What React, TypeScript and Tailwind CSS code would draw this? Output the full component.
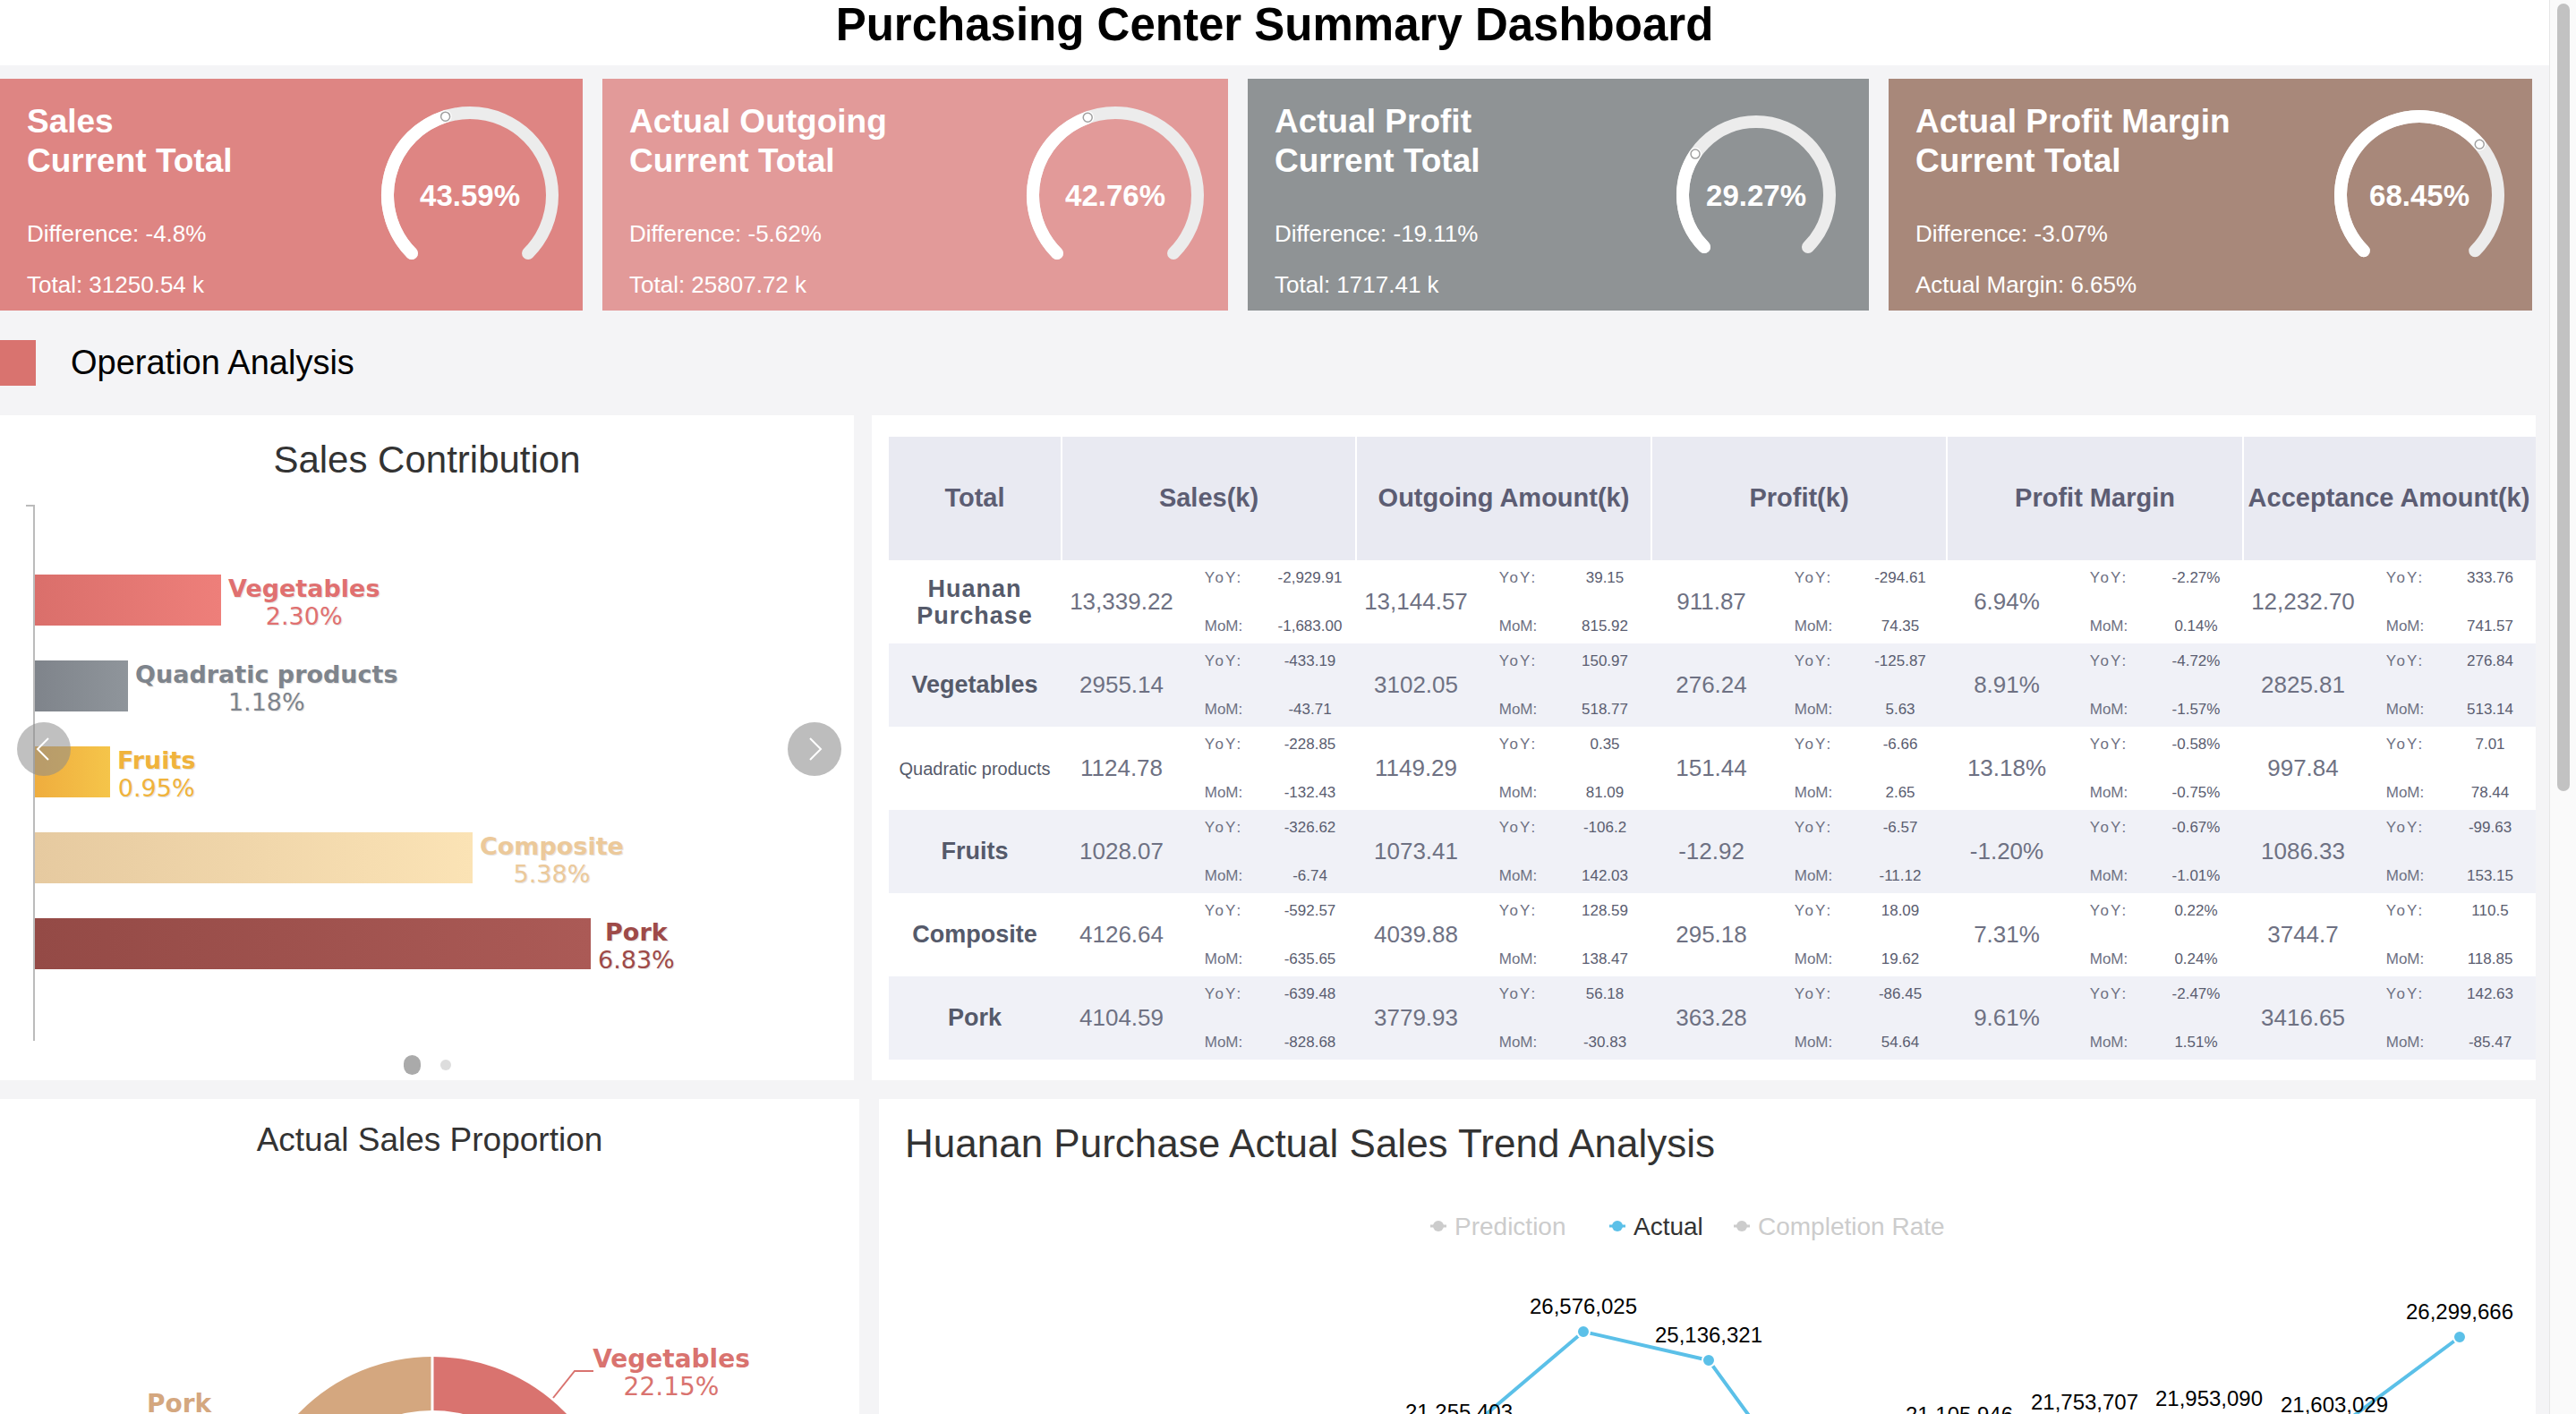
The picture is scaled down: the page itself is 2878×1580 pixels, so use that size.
import React from "react";

const F = { fontFamily: '"Liberation Sans", Arial, sans-serif' } as const;
const DJ = { fontFamily: '"DejaVu Sans", Verdana, sans-serif' } as const;

function polar(cx: number, cy: number, r: number, deg: number) {
  const a = (deg * Math.PI) / 180;
  return [cx + r * Math.cos(a), cy - r * Math.sin(a)];
}
function arc(cx: number, cy: number, r: number, from: number, to: number) {
  const [x1, y1] = polar(cx, cy, r, from);
  const [x2, y2] = polar(cx, cy, r, to);
  const large = from - to > 180 ? 1 : 0;
  return `M ${x1} ${y1} A ${r} ${r} 0 ${large} 1 ${x2} ${y2}`;
}

function Gauge({ pct, r }: { pct: number; r: number }) {
  const end = 225 - (270 * pct) / 100;
  const [mx, my] = polar(110, 110, r, end);
  return (
    <svg width="220" height="220" viewBox="0 0 220 220">
      <path d={arc(110, 110, r, 225, -45)} stroke="#ececec" strokeWidth="14" fill="none" strokeLinecap="round" />
      <path d={arc(110, 110, r, 225, end)} stroke="#ffffff" strokeWidth="14" fill="none" strokeLinecap="round" />
      <circle cx={mx} cy={my} r="5" fill="#fff" stroke="#a0a0a0" strokeWidth="1.5" />
      <text x="110" y="122" textAnchor="middle" fill="#fff" fontSize="33" fontWeight="bold" style={F}>
        {pct.toFixed(2)}%
      </text>
    </svg>
  );
}

const cards = [
  { t1: "Sales", t2: "Current Total", d: "Difference: -4.8%", tot: "Total: 31250.54 k", pct: 43.59, bg: "bg-[#de8583]", w: "w-[651px]", r: 92 },
  { t1: "Actual Outgoing", t2: "Current Total", d: "Difference: -5.62%", tot: "Total: 25807.72 k", pct: 42.76, bg: "bg-[#e29a99]", w: "w-[699px]", r: 92 },
  { t1: "Actual Profit", t2: "Current Total", d: "Difference: -19.11%", tot: "Total: 1717.41 k", pct: 29.27, bg: "bg-[#8f9395]", w: "w-[694px]", r: 82 },
  { t1: "Actual Profit Margin", t2: "Current Total", d: "Difference: -3.07%", tot: "Actual Margin: 6.65%", pct: 68.45, bg: "bg-[#a8887a]", w: "w-[719px]", r: 88 },
];

const bars = [
  { n: "Vegetables", p: "2.30%", w: 208, g: "bg-gradient-to-r from-[#da6f6b] to-[#ee7f7a]", c: "text-[#e07070]" },
  { n: "Quadratic products", p: "1.18%", w: 104, g: "bg-gradient-to-r from-[#7f848b] to-[#8f959b]", c: "text-[#7e848c]" },
  { n: "Fruits", p: "0.95%", w: 84, g: "bg-gradient-to-r from-[#efad3e] to-[#f5c54a]", c: "text-[#f0b33c]" },
  { n: "Composite", p: "5.38%", w: 489, g: "bg-gradient-to-r from-[#e6caa0] to-[#fbe3b5]", c: "text-[#ecc99a]" },
  { n: "Pork", p: "6.83%", w: 621, g: "bg-gradient-to-r from-[#944a46] to-[#ab5a56]", c: "text-[#9e4a48]" },
];

type Cell = [string, string, string];
const rows: { name: string; small?: boolean; two?: boolean; cells: Cell[] }[] = [
  { name: "Huanan Purchase", two: true, cells: [["13,339.22", "-2,929.91", "-1,683.00"], ["13,144.57", "39.15", "815.92"], ["911.87", "-294.61", "74.35"], ["6.94%", "-2.27%", "0.14%"], ["12,232.70", "333.76", "741.57"]] },
  { name: "Vegetables", cells: [["2955.14", "-433.19", "-43.71"], ["3102.05", "150.97", "518.77"], ["276.24", "-125.87", "5.63"], ["8.91%", "-4.72%", "-1.57%"], ["2825.81", "276.84", "513.14"]] },
  { name: "Quadratic products", small: true, cells: [["1124.78", "-228.85", "-132.43"], ["1149.29", "0.35", "81.09"], ["151.44", "-6.66", "2.65"], ["13.18%", "-0.58%", "-0.75%"], ["997.84", "7.01", "78.44"]] },
  { name: "Fruits", cells: [["1028.07", "-326.62", "-6.74"], ["1073.41", "-106.2", "142.03"], ["-12.92", "-6.57", "-11.12"], ["-1.20%", "-0.67%", "-1.01%"], ["1086.33", "-99.63", "153.15"]] },
  { name: "Composite", cells: [["4126.64", "-592.57", "-635.65"], ["4039.88", "128.59", "138.47"], ["295.18", "18.09", "19.62"], ["7.31%", "0.22%", "0.24%"], ["3744.7", "110.5", "118.85"]] },
  { name: "Pork", cells: [["4104.59", "-639.48", "-828.68"], ["3779.93", "56.18", "-30.83"], ["363.28", "-86.45", "54.64"], ["9.61%", "-2.47%", "1.51%"], ["3416.65", "142.63", "-85.47"]] },
];
const heads = ["Total", "Sales(k)", "Outgoing Amount(k)", "Profit(k)", "Profit Margin", "Acceptance Amount(k)"];
const colW = ["w-[192px]", "w-[329px]", "w-[330px]", "w-[330px]", "w-[331px]", "w-[326px]"];

const pts = [
  { x: 648, y: 378, l: "21,255,403" },
  { x: 787, y: 260, l: "26,576,025" },
  { x: 927, y: 292, l: "25,136,321" },
  { x: 1067, y: 484, l: "16,512,408" },
  { x: 1207, y: 381, l: "21,105,946" },
  { x: 1347, y: 367, l: "21,753,707" },
  { x: 1486, y: 363, l: "21,953,090" },
  { x: 1626, y: 370, l: "21,603,029" },
  { x: 1766, y: 266, l: "26,299,666" },
];

function ValueCell({ c, w }: { c: Cell; w: string }) {
  return (
    <div className={`${w} flex items-center shrink-0`}>
      <div className="w-[136px] text-center text-[26px] text-[#6e7183]">{c[0]}</div>
      <div className="w-[92px] flex flex-col gap-[28px] items-center text-[17px] text-[#6e7183]">
        <span className="tracking-[2px]">YoY:</span>
        <span>MoM:</span>
      </div>
      <div className="flex-1 flex flex-col gap-[28px] items-center text-[17px] text-[#5a5d70]">
        <span>{c[1]}</span>
        <span>{c[2]}</span>
      </div>
    </div>
  );
}

export default function App() {
  return (
    <div className="w-[2878px] h-[1580px] overflow-hidden flex items-start bg-[#f4f4f6]" style={F}>
      <div className="w-[2848px] shrink-0 flex flex-col">
        <div className="h-[73px] shrink-0 bg-white flex items-start justify-center">
          <h1 className="text-[51px] font-bold text-black leading-[56px]">Purchasing Center Summary Dashboard</h1>
        </div>
        <div className="flex shrink-0 gap-[22px] mt-[15px] h-[259px]">
          {cards.map((c) => (
            <div key={c.t1} className={`${c.w} ${c.bg} h-full flex justify-between items-center pr-[16px] shrink-0`}>
              <div className="flex flex-col pl-[30px] pt-[26px] h-full text-white">
                <div className="text-[37px] font-bold leading-[44px]">{c.t1}</div>
                <div className="text-[37px] font-bold leading-[44px]">{c.t2}</div>
                <div className="text-[26px] leading-[30px] mt-[44px]">{c.d}</div>
                <div className="text-[26px] leading-[30px] mt-[27px]">{c.tot}</div>
              </div>
              <Gauge pct={c.pct} r={c.r} />
            </div>
          ))}
        </div>
        <div className="flex shrink-0 items-center h-[51px] mt-[33px]">
          <div className="w-[40px] h-[51px] bg-[#d9736f]" />
          <span className="ml-[39px] text-[38px] text-black">Operation Analysis</span>
        </div>
        <div className="flex shrink-0 gap-[20px] mt-[33px] h-[743px]">
          <div className="w-[954px] bg-white shrink-0 relative flex flex-col">
            <div className="text-center text-[42px] text-[#333] mt-[25px] leading-[50px]">Sales Contribution</div>
            <div className="relative ml-[37px] mt-[25px] h-[599px] border-l-2 border-[#bbb]">
              <div className="absolute -left-[10px] top-0 w-[10px] h-[2px] bg-[#bbb]" />
              <div className="flex flex-col gap-[39px] pt-[78px]" style={DJ}>
                {bars.map((b) => (
                  <div key={b.n} className="flex items-start h-[57px]">
                    <div className={`${b.g} h-[57px]`} style={{ width: b.w }} />
                    <div className={`ml-[8px] flex flex-col items-center text-[27px] leading-[31px] ${b.c} [text-shadow:1px_1px_1px_rgba(0,0,0,0.12)]`}>
                      <span className="font-bold">{b.n}</span>
                      <span>{b.p}</span>
                    </div>
                  </div>
                ))}
              </div>
            </div>
            <div className="absolute left-[19px] top-[343px] w-[60px] h-[60px] rounded-full bg-[rgba(140,140,140,0.55)] flex items-center justify-center">
              <svg width="30" height="30" viewBox="0 0 30 30"><path d="M20 3 L8 15 L20 27" stroke="#fff" strokeWidth="2" fill="none" /></svg>
            </div>
            <div className="absolute left-[880px] top-[343px] w-[60px] h-[60px] rounded-full bg-[#bdbdbd] flex items-center justify-center">
              <svg width="30" height="30" viewBox="0 0 30 30"><path d="M10 3 L22 15 L10 27" stroke="#fff" strokeWidth="2" fill="none" /></svg>
            </div>
            <div className="absolute left-0 right-0 top-[715px] flex justify-center items-center gap-[22px]">
              <div className="w-[19px] h-[22px] rounded-full bg-[#aaa]" />
              <div className="w-[12px] h-[12px] rounded-full bg-[#ddd]" />
            </div>
          </div>
          <div className="w-[1859px] bg-white shrink-0 pl-[19px] pt-[24px]">
            <div className="flex h-[138px] bg-[#e9eaf2]">
              {heads.map((h, i) => (
                <div key={h} className={`${colW[i]} shrink-0 flex items-center justify-center text-[29px] font-bold text-[#5c5d73] ${i > 0 ? "border-l-2 border-white" : ""}`}>
                  {h}
                </div>
              ))}
            </div>
            {rows.map((r, ri) => (
              <div key={r.name} className={`flex h-[93px] ${ri % 2 === 1 ? "bg-[#f0f1f7]" : "bg-white"}`}>
                <div className={`${colW[0]} shrink-0 flex items-center justify-center text-center text-[#555a6a] ${r.small ? "text-[20px]" : "text-[27px] font-bold"} ${r.two ? "leading-[30px] tracking-[1px] text-[26px]" : ""}`}>
                  {r.two ? <span>Huanan<br />Purchase</span> : r.name}
                </div>
                {r.cells.map((c, ci) => (
                  <ValueCell key={ci} c={c} w={colW[ci + 1]} />
                ))}
              </div>
            ))}
          </div>
        </div>
        <div className="flex shrink-0 gap-[22px] mt-[21px] h-[600px]">
          <div className="w-[960px] bg-white shrink-0 relative overflow-hidden">
            <div className="text-center text-[37px] text-[#333] mt-[24px] leading-[44px]">Actual Sales Proportion</div>
            <svg className="absolute left-0 top-0" width="960" height="600" style={DJ}>
              <path d="M 483 288 A 208 208 0 0 1 691 496 L 631 496 A 148 148 0 0 0 483 348 Z" fill="#d9736f" />
              <path d="M 275 496 A 208 208 0 0 1 483 288 L 483 348 A 148 148 0 0 0 335 496 Z" fill="#d4a77f" />
              <line x1="483" y1="286" x2="483" y2="350" stroke="#fff" strokeWidth="3" />
              <path d="M 618 334 L 642 304 L 663 304" stroke="#d9736f" strokeWidth="2" fill="none" />
              <text x="750" y="300" textAnchor="middle" fontSize="28" fontWeight="bold" fill="#d9736f">Vegetables</text>
              <text x="750" y="331" textAnchor="middle" fontSize="28" fill="#d9736f">22.15%</text>
              <text x="200" y="350" textAnchor="middle" fontSize="28" fontWeight="bold" fill="#d4a77f">Pork</text>
            </svg>
          </div>
          <div className="w-[1851px] bg-white shrink-0 relative overflow-hidden">
            <div className="ml-[29px] mt-[24px] text-[44px] text-[#333] leading-[52px]">Huanan Purchase Actual Sales Trend Analysis</div>
            <svg className="absolute left-0 top-0" width="1851" height="600" style={F}>
              <g fontSize="28">
                <line x1="616" y1="142" x2="634" y2="142" stroke="#ccc" strokeWidth="3" />
                <circle cx="625" cy="142" r="6" fill="#ccc" />
                <text x="643" y="152" fill="#ccc">Prediction</text>
                <line x1="816" y1="142" x2="834" y2="142" stroke="#5bc0e8" strokeWidth="3" />
                <circle cx="825" cy="142" r="6" fill="#5bc0e8" />
                <text x="843" y="152" fill="#333">Actual</text>
                <line x1="955" y1="142" x2="973" y2="142" stroke="#ccc" strokeWidth="3" />
                <circle cx="964" cy="142" r="6" fill="#ccc" />
                <text x="982" y="152" fill="#ccc">Completion Rate</text>
              </g>
              <polyline points={pts.map((p) => `${p.x},${p.y}`).join(" ")} fill="none" stroke="#5bc0e8" strokeWidth="4" strokeLinejoin="round" />
              {pts.map((p) => (
                <g key={p.l}>
                  <circle cx={p.x} cy={p.y} r="7" fill="#5bc0e8" stroke="#fff" strokeWidth="2" />
                  <text x={p.x} y={p.y - 20} textAnchor="middle" fontSize="24" fill="#000">{p.l}</text>
                </g>
              ))}
            </svg>
          </div>
        </div>
      </div>
      <div className="w-[30px] h-full bg-[#fafafa] border-l border-[#e6e6e6] relative">
        <div className="absolute left-[8px] top-[4px] w-[14px] h-[880px] rounded-full bg-[#c2c2c2]" />
      </div>
    </div>
  );
}
